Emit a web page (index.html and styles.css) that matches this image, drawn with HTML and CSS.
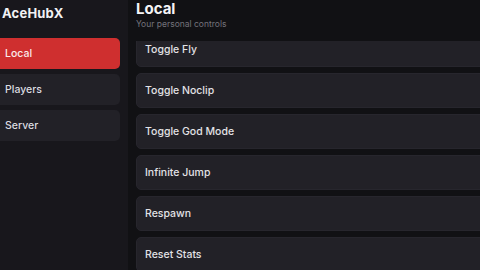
FILE: index.html
```html
<!DOCTYPE html>
<html>
<head>
<meta charset="utf-8">
<link rel="stylesheet" href="styles.css">
</head>
<body>
<aside class="sidebar">
  <div class="brand">AceHubX</div>
  <nav class="nav">
    <div class="nav-item active">Local</div>
    <div class="nav-item">Players</div>
    <div class="nav-item">Server</div>
  </nav>
</aside>
<main class="main">
  <header class="head">
    <h1 class="title">Local</h1>
    <p class="subtitle">Your personal controls</p>
  </header>
  <div class="viewport">
    <div class="list">
      <div class="card">Toggle Fly</div>
      <div class="card">Toggle Noclip</div>
      <div class="card">Toggle God Mode</div>
      <div class="card">Infinite Jump</div>
      <div class="card">Respawn</div>
      <div class="card">Reset Stats</div>
    </div>
  </div>
</main>
</body>
</html>
```
FILE: styles.css
```css
html, body {
  margin: 0;
  padding: 0;
}
body {
  width: 480px;
  height: 270px;
  overflow: hidden;
  display: flex;
  background: #111114;
  font-family: Inter, "Noto Sans", sans-serif;
  color: #e8e8ec;
}
.sidebar {
  width: 128px;
  flex: none;
  background: #18171c;
  display: flex;
  flex-direction: column;
}
.brand {
  font-weight: 700;
  font-size: 13px;
  line-height: 16px;
  padding: 5px 0 0 2px;
  color: #f2f2f4;
  letter-spacing: 0.2px;
}
.nav {
  margin-top: 17px;
  display: flex;
  flex-direction: column;
  gap: 5px;
  padding-right: 8px;
}
.nav-item {
  height: 31px;
  display: flex;
  align-items: center;
  padding-left: 5px;
  font-size: 10.5px;
  font-weight: 500;
  background: #222127;
  border-radius: 0 5px 5px 0;
  color: #dcdce0;
}
.nav-item.active {
  background: #cf2f2f;
  color: #fbeaea;
}
.main {
  flex: 1;
  min-width: 0;
  padding-left: 8px;
  display: flex;
  flex-direction: column;
  overflow: hidden;
}
.head {
  height: 41px;
  flex: none;
}
.title {
  margin: 0;
  font-size: 15px;
  line-height: 17px;
  font-weight: 700;
  color: #f4f4f6;
}
.subtitle {
  margin: 1px 0 0;
  font-size: 8.5px;
  line-height: 12px;
  color: #74737b;
}
.viewport {
  flex: 1;
  overflow: hidden;
}
.list {
  width: 400px;
  margin-top: -9px;
  display: flex;
  flex-direction: column;
  gap: 6px;
}
.card {
  height: 35px;
  box-sizing: border-box;
  display: flex;
  align-items: center;
  padding-left: 8px;
  font-size: 10.5px;
  font-weight: 500;
  background: #222127;
  border: 1px solid #27262d;
  border-radius: 5px;
  color: #e2e2e6;
}
```
